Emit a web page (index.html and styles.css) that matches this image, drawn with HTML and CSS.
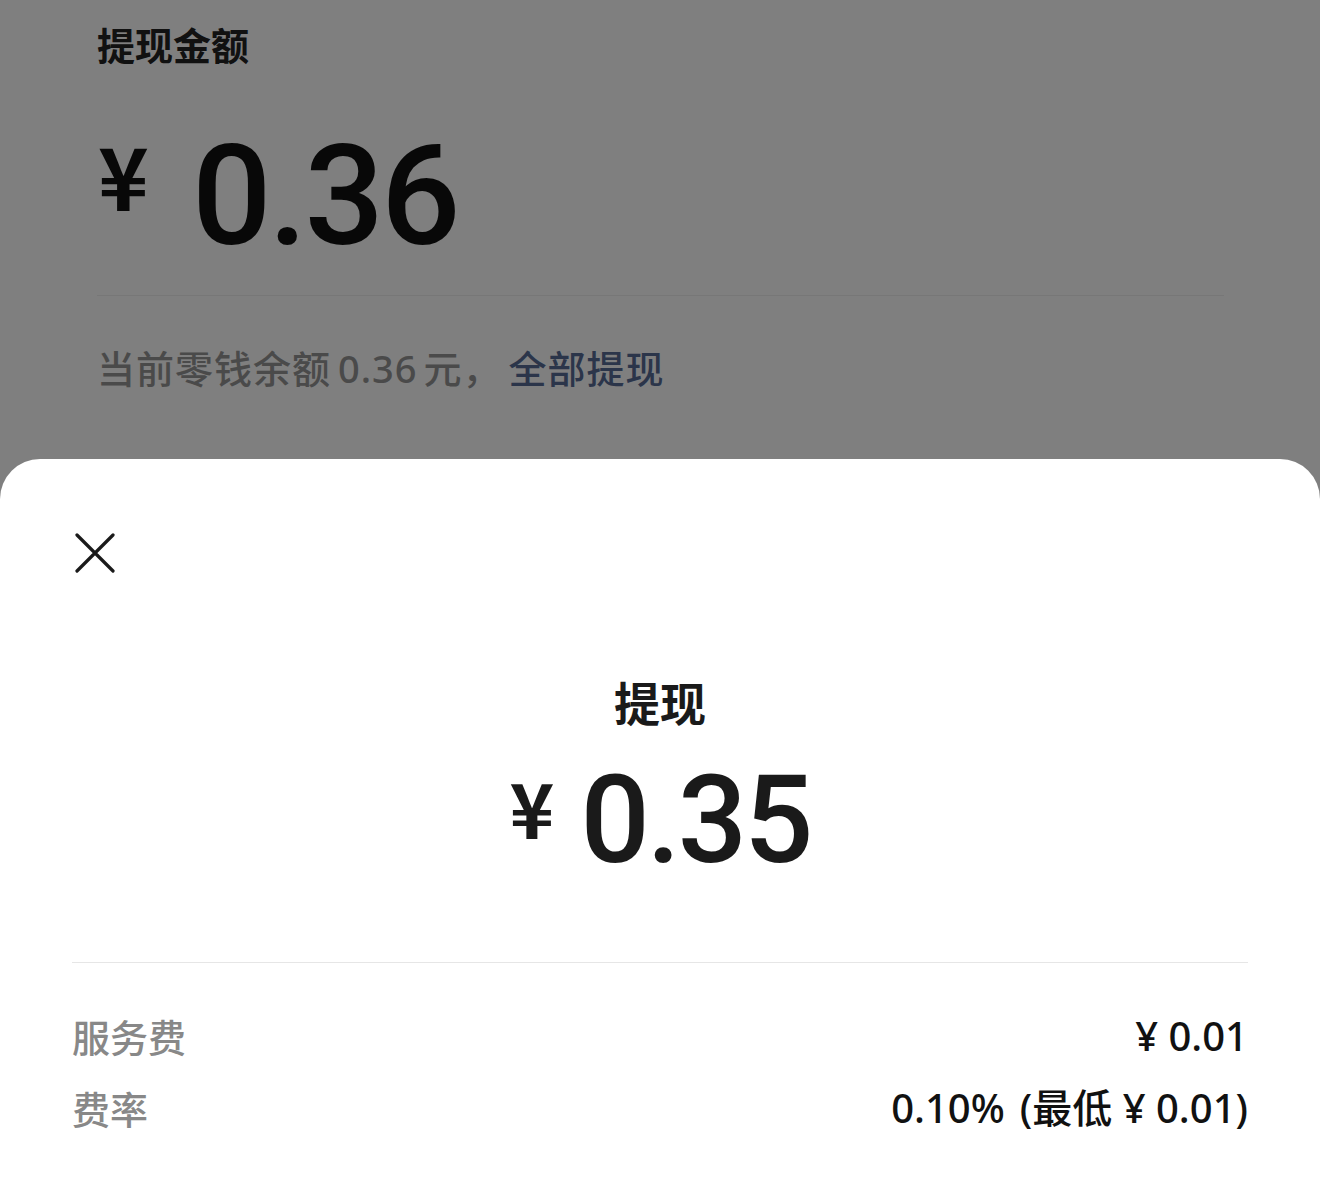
FILE: index.html
```html
<!DOCTYPE html>
<html lang="zh-CN">
<head>
<meta charset="utf-8">
<title>提现</title>
<link rel="stylesheet" href="styles.css">
</head>
<body>
<div class="screen">
  <section class="page">
    <h1 class="page-title">提现金额</h1>
    <div class="amount-input">
      <span class="yen-big">¥</span>
      <span class="amount-big">0.36</span>
    </div>
    <div class="rule"></div>
    <p class="balance">当前零钱余额<span class="num">0.36</span>元，<span class="link">全部提现</span></p>
  </section>

  <div class="mask"></div>

  <section class="sheet">
    <div class="close" aria-label="关闭">
      <svg width="40" height="40" viewBox="0 0 40 40">
        <path d="M2 2 L38 38 M38 2 L2 38" stroke="#1a1a1a" stroke-width="3.2" stroke-linecap="round" fill="none"/>
      </svg>
    </div>
    <h2 class="sheet-title">提现</h2>
    <div class="sheet-amount">
      <span class="yen-mid">¥</span>
      <span class="amount-mid">0.35</span>
    </div>
    <div class="sheet-rule"></div>
    <div class="row">
      <span class="label">服务费</span>
      <span class="value">¥ 0.01</span>
    </div>
    <div class="row row-2">
      <span class="label">费率</span>
      <span class="value">0.10%<span class="paren">(最低 ¥ 0.01)</span></span>
    </div>
  </section>
</div>
</body>
</html>
```

FILE: styles.css
```css
* { box-sizing: border-box; }
html, body {
  margin: 0;
  padding: 0;
  background: #ffffff;
}
body {
  font-family: "Noto Sans CJK SC", "Noto Sans", sans-serif;
  color: #1a1a1a;
}
.screen {
  position: relative;
  width: 1320px;
  height: 1197px;
  overflow: hidden;
  background: #ffffff;
}

/* underlying page */
.page {
  padding: 21px 97px 0 97px;
}
.page-title {
  margin: 0;
  font-size: 38px;
  line-height: 46px;
  font-weight: 700;
  color: #222;
}
.amount-input {
  display: flex;
  align-items: flex-start;
  margin-top: 62px;
  height: 130px;
}
.yen-big {
  font-family: "Noto Sans CJK SC", sans-serif;
  font-weight: 700;
  font-size: 86px;
  line-height: 84px;
  margin-top: 3px;
  margin-left: 1px;
  width: 94px;
  color: #111;
}
.amount-big {
  font-family: Roboto, "Noto Sans", sans-serif;
  font-weight: 500;
  font-size: 140px;
  line-height: 130px;
  letter-spacing: -3px;
  margin-top: 2px;
  color: #111;
}
.rule {
  margin-top: 36px;
  height: 1px;
  width: 1127px;
  background: #eeeeee;
}
.balance {
  margin: 49px 0 0 0;
  font-family: "Noto Sans", "Noto Sans CJK SC", sans-serif;
  font-size: 38px;
  line-height: 46px;
  letter-spacing: 1px;
  font-weight: 500;
  color: #959595;
}
.num {
  margin: 0 6px 0 7px;
}
.link {
  color: #576b95;
  margin-left: 7px;
}

/* dim overlay */
.mask {
  position: absolute;
  inset: 0;
  background: rgba(0, 0, 0, 0.5);
}

/* bottom sheet */
.sheet {
  position: absolute;
  left: 0;
  right: 0;
  top: 459px;
  bottom: 0;
  background: #ffffff;
  border-radius: 40px 40px 0 0;
  padding: 74px 72px 0 72px;
}
.close {
  width: 40px;
  height: 40px;
  margin-left: 3px;
}
.close svg { display: block; }
.sheet-title {
  margin: 100px 0 0 0;
  text-align: center;
  font-size: 46px;
  line-height: 56px;
  font-weight: 700;
  color: #1a1a1a;
}
.sheet-amount {
  margin-top: 32px;
  height: 120px;
  display: flex;
  justify-content: center;
  align-items: flex-start;
}
.yen-mid {
  font-weight: 700;
  font-size: 76px;
  line-height: 74px;
  margin-top: 8px;
  margin-right: 26px;
  color: #1a1a1a;
}
.amount-mid {
  font-family: Roboto, "Noto Sans", sans-serif;
  font-weight: 500;
  font-size: 122px;
  line-height: 120px;
  letter-spacing: -3px;
  color: #1a1a1a;
}
.sheet-rule {
  margin-top: 81px;
  height: 1px;
  background: #e6e6e6;
}
.row {
  margin-top: 48px;
  display: flex;
  justify-content: space-between;
  align-items: center;
  height: 50px;
}
.row-2 {
  margin-top: 22px;
}
.label {
  font-size: 38px;
  line-height: 50px;
  color: #888888;
  font-weight: 500;
}
.value {
  font-family: "Noto Sans", "Noto Sans CJK SC", sans-serif;
  font-size: 40px;
  line-height: 50px;
  color: #111111;
  font-weight: 500;
}
.paren {
  margin-left: 15px;
}
```
